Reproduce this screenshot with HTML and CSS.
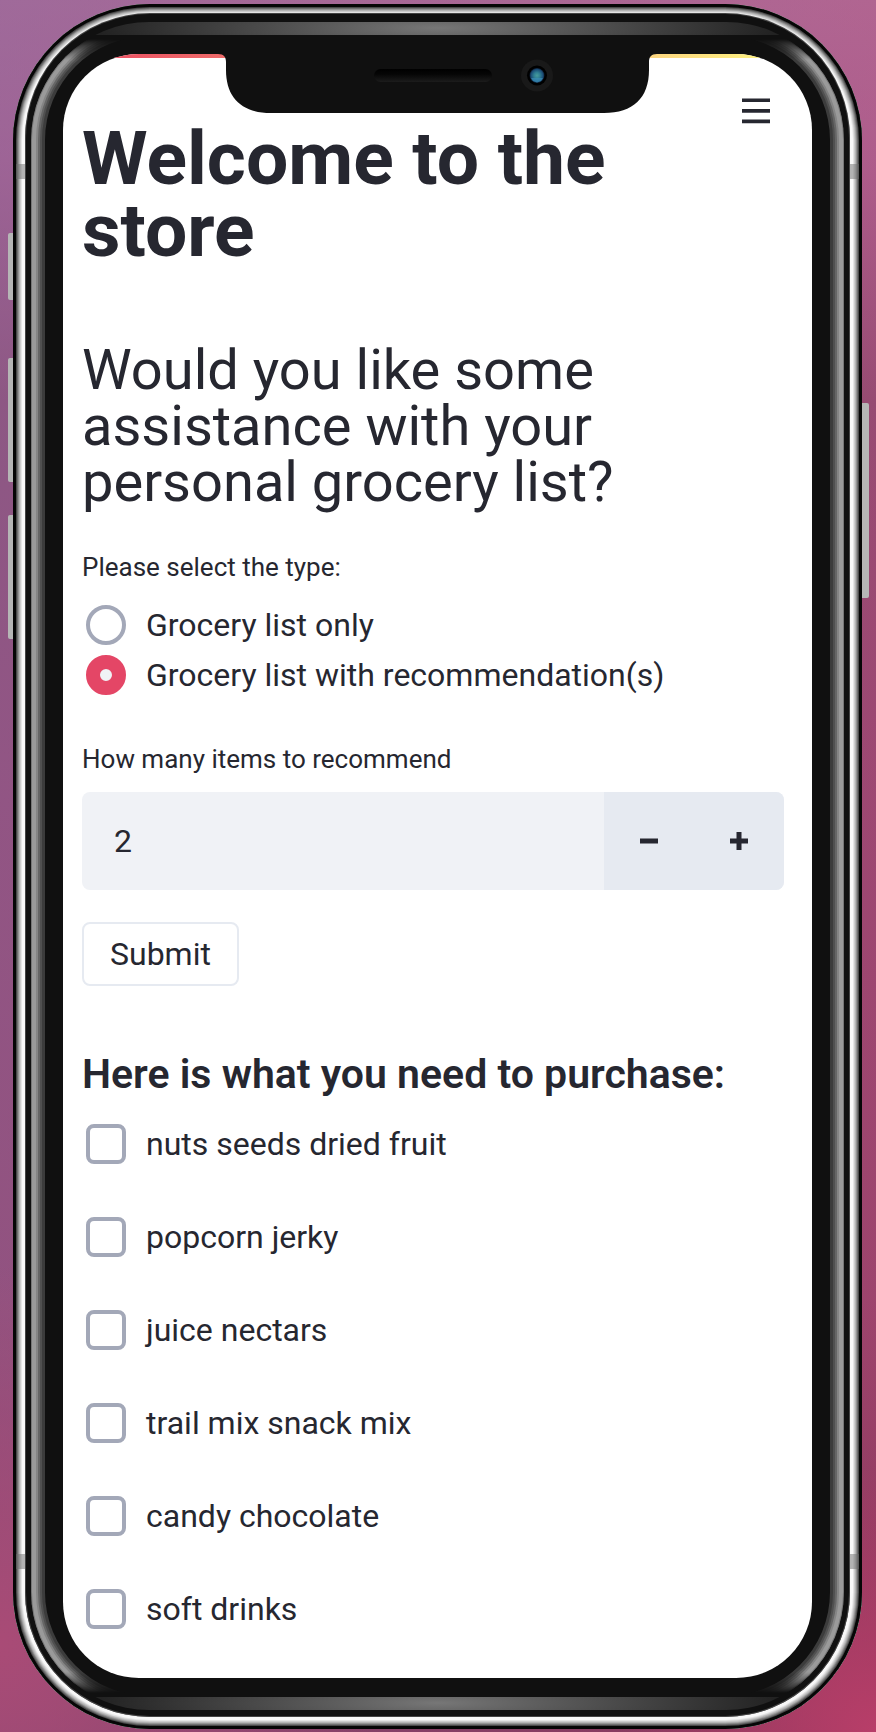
FILE: index.html
```html
<!DOCTYPE html>
<html lang="en">
<head>
<meta charset="utf-8">
<meta name="viewport" content="width=device-width, initial-scale=1">
<title>Welcome to the store</title>
<link rel="stylesheet" href="styles.css">
</head>
<body>
<div class="phone">
  <span class="key key-mute"></span>
  <span class="key key-up"></span>
  <span class="key key-down"></span>
  <span class="key key-power"></span>
  <span class="antenna antenna-top"></span>
  <span class="antenna antenna-bottom"></span>
  <div class="bezel">
    <div class="rim">
      <span class="rim-glow"></span>
      <div class="screen">
        <header class="toolbar">
          <button class="menu" type="button" aria-label="Menu">
            <svg width="28" height="26" viewBox="0 0 28 26" fill="#262730" aria-hidden="true"><path d="M0 .4h28v3.7H0zM0 11h28v3.7H0zM0 21.5h28v3.7H0z"/></svg>
          </button>
        </header>
        <main class="content">
          <h1 class="title">Welcome to the store</h1>
          <h2 class="question">Would you like some assistance with your personal grocery list?</h2>
          <form class="form">
            <fieldset class="choices">
              <legend class="caption">Please select the type:</legend>
              <label class="option"><input class="radio" type="radio" name="type">Grocery list only</label>
              <label class="option"><input class="radio" type="radio" name="type" checked>Grocery list with recommendation(s)</label>
            </fieldset>
            <label class="caption" for="count">How many items to recommend</label>
            <div class="stepper">
              <input class="number" id="count" type="number" value="2">
              <button class="step" type="button" aria-label="Decrease"><svg width="18" height="18" viewBox="0 0 18 18" fill="#262730" aria-hidden="true"><path d="M0 6.5h18v5H0z"/></svg></button>
              <button class="step" type="button" aria-label="Increase"><svg width="18" height="18" viewBox="0 0 18 18" fill="#262730" aria-hidden="true"><path d="M0 6.5h6.5V0h5v6.5H18v5h-6.5V18h-5v-6.5H0z"/></svg></button>
            </div>
            <button class="submit" type="button">Submit</button>
          </form>
          <h3 class="subtitle">Here is what you need to purchase:</h3>
          <div class="items">
            <label class="option"><input class="check" type="checkbox">nuts seeds dried fruit</label>
            <label class="option"><input class="check" type="checkbox">popcorn jerky</label>
            <label class="option"><input class="check" type="checkbox">juice nectars</label>
            <label class="option"><input class="check" type="checkbox">trail mix snack mix</label>
            <label class="option"><input class="check" type="checkbox">candy chocolate</label>
            <label class="option"><input class="check" type="checkbox">soft drinks</label>
          </div>
        </main>
        <div class="notch">
          <svg width="439" height="60" viewBox="0 0 439 60" aria-hidden="true">
            <defs>
              <linearGradient id="speaker" x2="0" y2="1"><stop offset="0" stop-color="#000"/><stop offset=".4" stop-color="#060606"/><stop offset="1" stop-color="#1c1c1c"/></linearGradient>
              <radialGradient id="lens"><stop offset="0" stop-color="#489c9c"/><stop offset=".4" stop-color="#2f7f93"/><stop offset=".8" stop-color="#1b4d76"/><stop offset="1" stop-color="#0a1a30"/></radialGradient>
            </defs>
            <path fill="#101010" d="M0 0C6 0 8 3 8 8v8c0 28 16 43 45 43h333c29 0 45-15 45-43V8c0-5 2-8 8-8z"/>
            <rect x="156" y="15" width="118" height="13" rx="6.5" fill="url(#speaker)"/>
            <circle cx="319" cy="21.5" r="16" fill="#191919"/>
            <circle cx="319" cy="21.5" r="10" fill="#000"/>
            <circle cx="319" cy="21.5" r="7.5" fill="url(#lens)"/>
            <path d="M313 24h12l-2 3-4 1.5-4-1.5z" fill="#3b8fb8" opacity=".7"/>
          </svg>
        </div>
      </div>
    </div>
  </div>
</div>
</body>
</html>
```
FILE: styles.css
```css
* { box-sizing: border-box; }

body {
  margin: 0;
  padding: 4px 14px 3px 13px;
  min-height: 100vh;
  color: #262730;
  font-family: Roboto, "Liberation Sans", sans-serif;
  font-size: 32px;
  background:
    radial-gradient(circle at 100% 100%, #b83e69 0, rgba(184, 62, 105, 0) 260px),
    radial-gradient(circle at 0 95%, #a94b76 0, rgba(169, 75, 118, 0) 380px),
    linear-gradient(90deg, rgba(139, 96, 148, .5), rgba(170, 66, 110, .3)),
    linear-gradient(#b474a0 0, #b06898 160px, #8f4f74 400px, #984a74 800px, #98456c 1300px, #7c304f 100%);
}

.phone {
  position: relative;
  padding: 10px 13px 13px;
  border-radius: 137px;
  background: #101010;
  box-shadow:
    inset 0 0 0 3px #060606,
    inset 0 0 0 4px #4a4a4a,
    inset 0 0 0 5px #707070,
    inset 0 0 0 6px #939393,
    inset 0 0 0 7px #b4b4b4,
    inset 0 0 0 8px #ccc,
    inset 0 0 0 9px #e4e4e4,
    inset 0 0 0 12px #f8f8f8,
    inset 0 0 0 13px #555;
}

.bezel {
  padding: 8px 5px 6px;
  border-radius: 124px;
  background: #101010;
  box-shadow: 0 0 0 1px #444;
}

.rim {
  position: relative;
  padding: 32px;
  border-radius: 118px;
  background:
    radial-gradient(ellipse 340px 40px at 50% 6px, #777, #222) top / 100% 13px no-repeat,
    radial-gradient(ellipse 340px 40px at 50% 6px, #777, #222) bottom / 100% 13px no-repeat,
    #101010;
}

.rim-glow {
  position: absolute;
  inset: 0;
  border-radius: inherit;
  box-shadow:
    inset 0 0 0 1px #777,
    inset 0 0 0 5px #9a9a9a,
    inset 0 0 0 7px #858585,
    inset 0 0 0 9px #666,
    inset 0 0 0 11px #505050,
    inset 0 0 0 14px #3c3c3c;
  mask-image: linear-gradient(transparent 17px, #000 38px, #000 calc(100% - 38px), transparent calc(100% - 17px));
}

.screen {
  position: relative;
  overflow: hidden;
  border-radius: 76px;
  background: #fff;
}

.toolbar {
  display: flex;
  justify-content: flex-end;
  height: 68px;
  padding: 44px 42px 0;
}

.toolbar::before {
  content: "";
  position: absolute;
  inset: 0 0 auto;
  height: 4px;
  background: linear-gradient(90deg, #ea4860, #f0716c 25%, #fbc680 70%, #fffd80);
}

.menu {
  display: flex;
  align-self: flex-start;
  padding: 0;
  border: 0;
  background: none;
}

.content { padding: 0 28px 49px 19px; }

.title {
  margin: 0;
  max-width: 620px;
  font-size: 75px;
  font-weight: 700;
  line-height: 72px;
}

.question {
  margin: 76px 0 0;
  max-width: 620px;
  font-size: 56px;
  font-weight: 400;
  line-height: 56px;
}

.form {
  display: flex;
  flex-direction: column;
  margin-top: 41px;
}

.choices {
  display: grid;
  gap: 10px;
  margin: 0 0 48px;
  padding: 0;
  border: 0;
}

.caption {
  padding: 0;
  margin-bottom: 17px;
  font-size: 26px;
  line-height: 32px;
}

.choices .caption { margin-bottom: 22px; }

.option {
  display: flex;
  align-items: center;
  gap: 20px;
  padding-left: 4px;
  line-height: 40px;
}

.radio,
.check {
  flex: none;
  width: 40px;
  height: 40px;
  margin: 0;
  appearance: none;
  border: 4px solid #a3a8b8;
  border-radius: 8px;
  background: #fff;
}

.radio { border-radius: 50%; }

.radio:checked {
  border: 14px solid #e44666;
  background: #f0f2f6;
}

.stepper {
  display: flex;
  height: 98px;
  overflow: hidden;
  border-radius: 8px;
  background: #f0f2f6;
}

.number {
  flex: 1;
  min-width: 0;
  padding: 0 32px;
  border: 0;
  background: none;
  color: inherit;
  font: inherit;
  appearance: textfield;
}

.number::-webkit-inner-spin-button { appearance: none; }

.step {
  display: grid;
  place-items: center;
  width: 90px;
  padding: 0;
  border: 0;
  background: #e6eaf1;
}

.submit {
  align-self: flex-start;
  margin-top: 32px;
  padding: 0 26px;
  border: 2px solid #e6eaf1;
  border-radius: 8px;
  background: #fff;
  color: inherit;
  font: inherit;
  line-height: 60px;
}

.subtitle {
  margin: 64px 0 26px;
  font-size: 41px;
  font-weight: 600;
  line-height: 48px;
}

.items {
  display: grid;
  gap: 53px;
}

.notch {
  position: absolute;
  inset: 0 0 auto;
  display: flex;
  justify-content: center;
  pointer-events: none;
}

.key {
  position: absolute;
  left: -5px;
  width: 5px;
  border-radius: 2px 0 0 2px;
  background: #b6b6b6;
}

.key-mute { top: 229px; height: 67px; }
.key-up { top: 354px; height: 124px; }
.key-down { top: 511px; height: 124px; }

.key-power {
  top: 399px;
  right: -7px;
  left: auto;
  width: 7px;
  height: 195px;
  border-radius: 0 2px 2px 0;
}

.antenna {
  position: absolute;
  right: 3px;
  left: 3px;
  height: 15px;
  border: solid rgba(110, 110, 110, .5);
  border-width: 0 9px;
}

.antenna-top { top: 160px; }
.antenna-bottom { bottom: 160px; }
```
